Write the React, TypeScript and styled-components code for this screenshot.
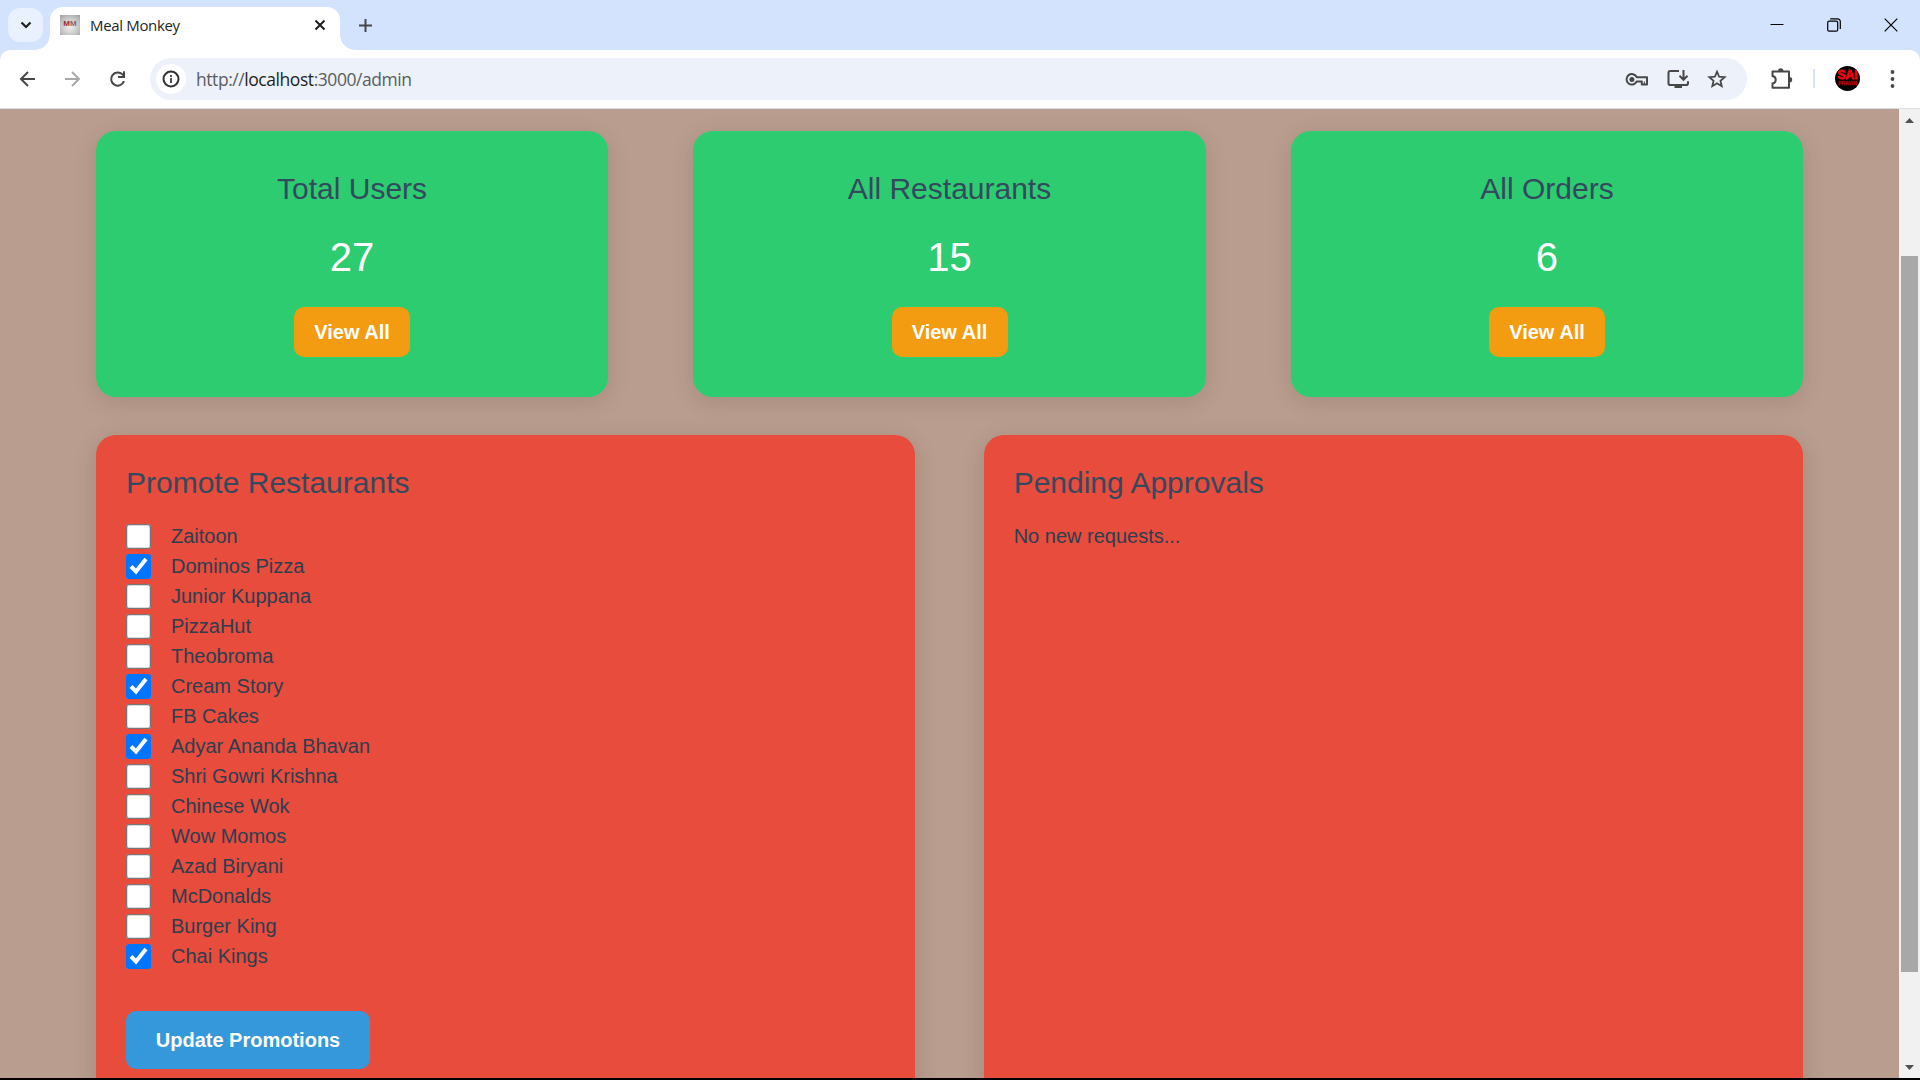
import React from "react";
import styled, { createGlobalStyle } from "styled-components";

const GlobalStyle = createGlobalStyle`
  *, *::before, *::after { box-sizing: border-box; }
  html, body { margin: 0; padding: 0; background: #000; overflow: hidden; }
  button { border: 0; margin: 0; cursor: pointer; font-family: inherit; }
  svg { display: block; flex: none; }
`;

const uiFont = `"Open Sans", "Noto Sans", sans-serif`;
const pageFont = `"Liberation Sans", Arial, sans-serif`;

const Window = styled.div`
  width: 1920px;
  height: 1080px;
  padding-bottom: 2px;
  display: flex;
  flex-direction: column;
  overflow: hidden;
  background: #000;
`;

/* ---- browser chrome ---- */

const TabStrip = styled.header`
  height: 50px;
  flex: none;
  display: flex;
  align-items: flex-end;
  background: #d3e2fd;
`;

const TabSearch = styled.button`
  width: 35px;
  height: 34px;
  margin: 0 7px 8px 8px;
  padding: 0;
  display: flex;
  align-items: center;
  justify-content: center;
  border-radius: 12px;
  background: #e9f0fe;
`;

const Tab = styled.div`
  position: relative;
  width: 290px;
  height: 43px;
  padding: 0 10px 7px 10px;
  display: flex;
  align-items: center;
  border-radius: 13px 13px 0 0;
  background: #fff;

  &::before,
  &::after {
    content: "";
    position: absolute;
    bottom: 0;
    width: 15px;
    height: 15px;
  }
  &::before {
    left: -15px;
    background: radial-gradient(circle at 0 0, transparent 14.5px, #fff 15px);
  }
  &::after {
    right: -15px;
    background: radial-gradient(circle at 100% 0, transparent 14.5px, #fff 15px);
  }
`;

const Favicon = styled.div`
  width: 20px;
  height: 20px;
  display: flex;
  align-items: flex-start;
  justify-content: center;
  padding-top: 4px;
  background: radial-gradient(circle at 50% 58%, #e9e9e9 10%, #c4c4c4 60%, #9c9c9c 100%);
  color: #9a2630;
  font: 700 8px/9px ${pageFont};

  span {
    color: #8b5f66;
  }
`;

const TabTitle = styled.span`
  flex: 1;
  margin: 0 0 0 10px;
  color: #1f1f1f;
  font: 400 15px/20px ${uiFont};
  letter-spacing: -0.34px;
  white-space: nowrap;
`;

const NewTab = styled.div`
  height: 50px;
  padding: 0 0 0 19px;
  display: flex;
  align-items: center;
  flex: 1;
`;

const WindowButtons = styled.div`
  height: 50px;
  display: flex;
  align-items: center;
  padding-right: 22px;
  gap: 43px;
`;

const ToolbarBack = styled.div`
  flex: none;
  background: #d3e2fd;
`;

const Toolbar = styled.nav`
  height: 59px;
  padding: 0 20px 1px 14px;
  display: flex;
  align-items: center;
  border-radius: 10px 10px 0 0;
  border-bottom: 1px solid #dbe0e2;
  background: #fff;
`;

const NavButtons = styled.div`
  width: 136px;
  display: flex;
  gap: 17px;
`;

const AddressBar = styled.div`
  width: 1597px;
  height: 42px;
  padding: 0 20px 0 6px;
  display: flex;
  align-items: center;
  border-radius: 21px;
  background: #ecf1fa;
`;

const SiteInfo = styled.span`
  width: 30px;
  height: 30px;
  display: flex;
  align-items: center;
  justify-content: center;
  border-radius: 50%;
  background: #fff;
`;

const Url = styled.span`
  flex: 1;
  margin: 1px 0 0 10px;
  color: #5a5d61;
  font: 400 17.5px/26px ${uiFont};
  letter-spacing: -0.44px;

  b {
    font-weight: 400;
    color: #1f1f1f;
  }
`;

const AddressIcons = styled.div`
  display: flex;
  align-items: center;
  gap: 17px;
`;

const ToolbarIcons = styled.div`
  flex: 1;
  display: flex;
  align-items: center;
  justify-content: flex-end;
`;

const Divider = styled.span`
  width: 2px;
  height: 19px;
  margin: 0 20px 0 20px;
  background: #d3e2fd;
`;

const Avatar = styled.span`
  width: 25px;
  height: 25px;
  margin-right: 25px;
  display: flex;
  flex-direction: column;
  align-items: center;
  justify-content: center;
  border-radius: 50%;
  overflow: hidden;
  background: #000;
  color: #f0060a;
  font: 700 12px/9px ${pageFont};
  -webkit-text-stroke: 0.8px #f0060a;

  small {
    margin-top: 1px;
    font-size: 5px;
    line-height: 5px;
    color: #b00004;
    -webkit-text-stroke: 0.4px #b00004;
  }
`;

/* ---- page ---- */

const Viewport = styled.div`
  flex: 1;
  min-height: 0;
  display: flex;
`;

const Page = styled.main`
  flex: 1;
  padding: 22px 96px 0;
  overflow: hidden;
  background: #b99d8e;
  color: #2c3e50;
  font-family: ${pageFont};
  font-size: 20px;
`;

const CardRow = styled.section<{ $bottom?: number }>`
  display: flex;
  justify-content: space-between;
  margin-bottom: ${(p) => p.$bottom ?? 0}px;
`;

const StatCard = styled.article`
  width: 30%;
  height: 266px;
  padding: 40px 20px 0;
  display: flex;
  flex-direction: column;
  align-items: center;
  border-radius: 20px;
  background: #2ecc71;
  box-shadow: 0 5px 25px rgba(0, 0, 0, 0.1);
`;

const Heading = styled.h2`
  margin: 0;
  color: #34495e;
  font-size: 30px;
  line-height: 36px;
  font-weight: 400;
  white-space: nowrap;
`;

const Count = styled.p`
  margin: 26px 0 0;
  color: #fff;
  font-size: 40px;
  line-height: 48px;
`;

const ActionButton = styled.button<{ $tone: string; $w: number; $h: number; $top: number }>`
  width: ${(p) => p.$w}px;
  height: ${(p) => p.$h}px;
  margin-top: ${(p) => p.$top}px;
  padding: 0;
  border-radius: 10px;
  background: ${(p) => p.$tone};
  color: #fff;
  font-size: 20px;
  font-weight: 700;
`;

const Panel = styled.article`
  width: 48%;
  height: 700px;
  padding: 30px;
  border-radius: 20px;
  background: #e74c3c;
  box-shadow: 0 5px 25px rgba(0, 0, 0, 0.12);
`;

const List = styled.ul`
  margin: 20px 0 0;
  padding: 0;
  list-style: none;
`;

const Option = styled.label`
  height: 30px;
  display: flex;
  align-items: center;
  gap: 20px;
  line-height: 30px;
`;

const Check = styled.input`
  zoom: 1.25;
  width: 20px;
  height: 20px;
  margin: 0;
`;

const Note = styled.p`
  margin: 20px 0 0;
  line-height: 30px;
`;

const ScrollTrack = styled.aside`
  width: 21px;
  flex: none;
  padding: 9px 2px 8px;
  display: flex;
  flex-direction: column;
  align-items: center;
  background: #f1f1f1;
`;

const ScrollThumb = styled.div`
  width: 17px;
  height: 716px;
  margin: 133px 0 auto;
  background: #a8a8a8;
`;

const stats = [
  { label: "Total Users", value: 27 },
  { label: "All Restaurants", value: 15 },
  { label: "All Orders", value: 6 },
];

const restaurants: [string, boolean][] = [
  ["Zaitoon", false],
  ["Dominos Pizza", true],
  ["Junior Kuppana", false],
  ["PizzaHut", false],
  ["Theobroma", false],
  ["Cream Story", true],
  ["FB Cakes", false],
  ["Adyar Ananda Bhavan", true],
  ["Shri Gowri Krishna", false],
  ["Chinese Wok", false],
  ["Wow Momos", false],
  ["Azad Biryani", false],
  ["McDonalds", false],
  ["Burger King", false],
  ["Chai Kings", true],
];

type IconProps = {
  w: number;
  h: number;
  color?: string;
  stroke?: number;
  children: React.ReactNode;
};

const Icon = ({ w, h, color = "#474747", stroke = 2, children }: IconProps) => (
  <svg width={w} height={h} viewBox={`0 0 ${w} ${h}`} fill="none" stroke={color} strokeWidth={stroke}>
    {children}
  </svg>
);

export default function App() {
  return (
    <Window>
      <GlobalStyle />
      <TabStrip>
        <TabSearch>
          <Icon w={12} h={8} color="#1f1f1f" stroke={2.2}>
            <path d="M1.5 1.5 6 6l4.500-4.500" />
          </Icon>
        </TabSearch>
        <Tab>
          <Favicon>
            M<span>M</span>
          </Favicon>
          <TabTitle>Meal Monkey</TabTitle>
          <Icon w={20} h={20} color="#1f1f1f">
            <path d="m5.500 5.500 9 9m0-9-9 9" />
          </Icon>
        </Tab>
        <NewTab>
          <Icon w={13} h={13}>
            <path d="M6.500 0v13M0 6.500h13" />
          </Icon>
        </NewTab>
        <WindowButtons>
          <Icon w={14} h={14} color="#000" stroke={1}>
            <path d="M0.500 6.500h13" />
          </Icon>
          <Icon w={14} h={14} color="#000" stroke={1.2}>
            <rect x="0.700" y="3.200" width="10" height="10" rx="1.500" />
            <path d="M3.200.8H10.500a2.800 2.800 0 0 1 2.800 2.800V11" />
          </Icon>
          <Icon w={14} h={14} color="#000" stroke={1.2}>
            <path d="m.7.700 12.600 12.600m0-12.600L.7 13.300" />
          </Icon>
        </WindowButtons>
      </TabStrip>

      <ToolbarBack>
        <Toolbar>
          <NavButtons>
            <Icon w={28} h={28}>
              <path d="M21 14H7.500M14 7l-7 7 7 7" />
            </Icon>
            <Icon w={28} h={28} color="#a9a9a9">
              <path d="M6 14h13.500M13 7l7 7-7 7" />
            </Icon>
            <Icon w={28} h={28}>
              <path d="M20 16.200a6.600 6.600 0 1 1-1.500-6.800l2 2.200" />
              <path d="M20 6.200v5.900h-6" />
            </Icon>
          </NavButtons>
          <AddressBar>
            <SiteInfo>
              <Icon w={18} h={18} color="#333">
                <circle cx="9" cy="9" r="7.500" />
                <path d="M9 8v5M9 4.900v2" strokeWidth="1.700" />
              </Icon>
            </SiteInfo>
            <Url>
              http://<b>localhost</b>:3000/admin
            </Url>
            <AddressIcons>
              <Icon w={24} h={20}>
                <path d="M11.700 8.200a5.300 5.300 0 1 0 0 4.200h5.100v3.200h5.200V8.200z" strokeLinejoin="round" />
                <path d="M19.400 12.400v3" strokeWidth="1" />
                <circle cx="6.900" cy="10.400" r="2.500" fill="#474747" stroke="none" />
              </Icon>
              <Icon w={24} h={20}>
                <path d="M13 2H4.200Q2.500 2 2.500 3.800v10.400Q2.500 16 4.300 16h15.900q1.800 0 1.800-1.800v-2M17.500 1v9.500M13.500 6.800l4 4 4-4" />
                <path d="M8.500 17.500h7.500" strokeWidth="3" />
              </Icon>
              <Icon w={20} h={20} stroke={1.8}>
                <path d="m10 2.700 2.150 5.050 5.450.450-4.150 3.600 1.250 5.350L10 14.300l-4.700 2.850 1.250-5.350L2.400 8.200l5.450-.450z" />
              </Icon>
            </AddressIcons>
          </AddressBar>
          <ToolbarIcons>
            <Icon w={22} h={22}>
              <path d="M1.500 3.600H18v16.200H1.500v-4.300c4.300-.8 4.300-6.800 0-7.600z" strokeLinejoin="round" />
              <path d="M7 3a2.700 2.700 0 0 1 5.400 0zM18.500 9a2.700 2.700 0 0 1 0 5.400z" fill="#474747" stroke="none" />
            </Icon>
            <Divider />
            <Avatar>
              SAI
              <small>PRAVIN</small>
            </Avatar>
            <Icon w={15} h={20}>
              <g fill="#474747" stroke="none">
                <circle cx="7.500" cy="3" r="1.900" />
                <circle cx="7.500" cy="10" r="1.900" />
                <circle cx="7.500" cy="17" r="1.900" />
              </g>
            </Icon>
          </ToolbarIcons>
        </Toolbar>
      </ToolbarBack>

      <Viewport>
        <Page>
          <CardRow $bottom={38}>
            {stats.map((s) => (
              <StatCard key={s.label}>
                <Heading>{s.label}</Heading>
                <Count>{s.value}</Count>
                <ActionButton $tone="#f39c12" $w={116} $h={50} $top={26}>
                  View All
                </ActionButton>
              </StatCard>
            ))}
          </CardRow>
          <CardRow>
            <Panel>
              <Heading>Promote Restaurants</Heading>
              <List>
                {restaurants.map(([name, on]) => (
                  <li key={name}>
                    <Option>
                      <Check type="checkbox" defaultChecked={on} />
                      {name}
                    </Option>
                  </li>
                ))}
              </List>
              <ActionButton $tone="#3498db" $w={244} $h={58} $top={40}>
                Update Promotions
              </ActionButton>
            </Panel>
            <Panel>
              <Heading>Pending Approvals</Heading>
              <Note>No new requests...</Note>
            </Panel>
          </CardRow>
        </Page>
        <ScrollTrack>
          <Icon w={9} h={5}>
            <path d="M0 5 4.500 0 9 5z" fill="#505050" stroke="none" />
          </Icon>
          <ScrollThumb />
          <Icon w={9} h={5}>
            <path d="M0 0h9L4.500 5z" fill="#505050" stroke="none" />
          </Icon>
        </ScrollTrack>
      </Viewport>
    </Window>
  );
}
